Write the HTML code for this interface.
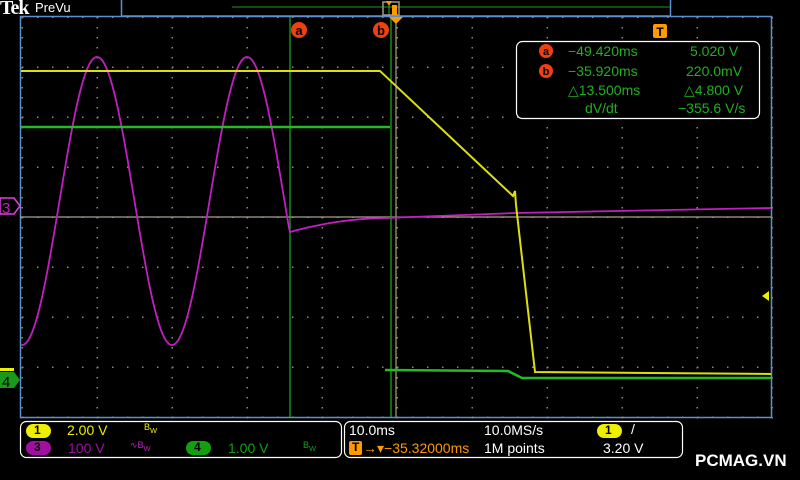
<!DOCTYPE html><html><head><style>
body{margin:0;width:800px;height:480px;background:#000;overflow:hidden;font-family:"Liberation Sans",sans-serif}
svg{position:absolute;left:0;top:0}
.t{position:absolute;font-size:14px;white-space:nowrap}
</style></head><body>
<svg id="s" width="800" height="480" xmlns="http://www.w3.org/2000/svg">
<rect x="121.5" y="-2" width="549" height="18" fill="none" stroke="#5a8fd0" stroke-width="1.5"/>
<line x1="232" y1="7" x2="670" y2="7" stroke="#1a9a1a"/>
<line x1="389" y1="2" x2="389" y2="15" stroke="#2a2"/>
<rect x="383" y="2" width="16" height="13" fill="none" stroke="#998" stroke-width="1.5"/>
<rect x="392" y="5" width="5" height="10" fill="#f90"/>
<polygon points="386,1 392,1 389,6" fill="#f90"/>
<rect x="20.5" y="16.5" width="751" height="401" fill="none" stroke="#5a8fd0" stroke-width="1.5"/>
<g id="grid"></g>
<line x1="20" y1="217" x2="771" y2="217" stroke="#a8a088" stroke-width="1.2"/>
<line x1="396" y1="17" x2="396" y2="417" stroke="#a8a088" stroke-width="1.2"/>
<line x1="290" y1="17" x2="290" y2="417" stroke="#1db01d" stroke-width="1.2"/>
<line x1="391" y1="17" x2="391" y2="417" stroke="#1db01d" stroke-width="1.2"/>
<polygon points="389,17 403,17 396,24" fill="#f90"/>
<path id="mag" fill="none" stroke="#c020c0" stroke-width="1.8"/>
<path d="M21 127 L390 127" stroke="#22bb22" stroke-width="2.5"/>
<path d="M385 370 L508 371 L522 378 L771 378" fill="none" stroke="#22bb22" stroke-width="2.5"/>
<path d="M21 71 L380 71 L513 196 L515 191 L516 205 L535 372 L771 374" fill="none" stroke="#dddd10" stroke-width="2"/>
<circle cx="299" cy="30" r="8" fill="#f04010"/><text x="299" y="35" fill="#000" font-size="13" font-weight="bold" text-anchor="middle">a</text>
<circle cx="381" cy="30" r="8" fill="#f04010"/><text x="381" y="35" fill="#000" font-size="13" font-weight="bold" text-anchor="middle">b</text>
<rect x="653" y="24" width="14" height="14" rx="2" fill="#f90"/><text x="660" y="36" fill="#000" font-size="12" font-weight="bold" text-anchor="middle">T</text>
<rect x="516.5" y="41.5" width="243" height="77" rx="6" fill="#000" stroke="#fff" stroke-width="1.2"/>
<circle cx="546" cy="51" r="7" fill="#f04010"/><text x="546" y="55" fill="#000" font-size="11" font-weight="bold" text-anchor="middle">a</text>
<circle cx="546" cy="71" r="7" fill="#f04010"/><text x="546" y="75" fill="#000" font-size="11" font-weight="bold" text-anchor="middle">b</text>
<polygon points="0,198 14,198 20,206 14,214 0,214" fill="#000" stroke="#e040e0" stroke-width="1.5"/>
<text x="2" y="213" fill="#c020c0" font-size="15">3</text>
<rect x="0" y="368" width="14" height="3" fill="#ee0"/>
<polygon points="0,372 14,372 20,380 14,388 0,388" fill="#1a9a1a"/>
<text x="2" y="387" fill="#000" font-size="15">4</text>
<polygon points="769,291 769,301 762,296" fill="#ee0"/>
<rect x="20.5" y="421.5" width="321" height="36" rx="6" fill="none" stroke="#fff" stroke-width="1.2"/>
<rect x="344.5" y="421.5" width="338" height="36" rx="6" fill="none" stroke="#fff" stroke-width="1.2"/>
<rect x="26" y="424" width="25" height="14" rx="7" fill="#ee0"/>
<rect x="26" y="441" width="25" height="14" rx="7" fill="#a010a0"/>
<rect x="186" y="441" width="25" height="14" rx="7" fill="#10a010"/>
<rect x="597" y="424" width="25" height="14" rx="7" fill="#ee0"/>
<rect x="349" y="441" width="13" height="14" rx="2" fill="#f90"/>
</svg>
<div class="t" style="left:0px;top:-3px;color:#fff;font-family:'Liberation Serif',serif;font-weight:bold;font-size:20px;letter-spacing:-1px">Tek</div>
<div class="t" style="left:35px;top:0px;color:#fff;font-size:13px">PreVu</div>
<div class="t" style="left:568px;top:43px;color:#20b020">−49.420ms</div>
<div class="t" style="left:690px;top:43px;color:#20b020">5.020 V</div>
<div class="t" style="left:568px;top:63px;color:#20b020">−35.920ms</div>
<div class="t" style="left:686px;top:63px;color:#20b020">220.0mV</div>
<div class="t" style="left:568px;top:82px;color:#20b020">△13.500ms</div>
<div class="t" style="left:684px;top:82px;color:#20b020">△4.800 V</div>
<div class="t" style="left:585px;top:100px;color:#20b020">dV/dt</div>
<div class="t" style="left:678px;top:100px;color:#20b020">−355.6 V/s</div>
<div class="t" style="left:34px;top:423px;color:#000;font-size:12px;font-weight:bold">1</div>
<div class="t" style="left:34px;top:440px;color:#000;font-size:12px;font-weight:bold">3</div>
<div class="t" style="left:194px;top:440px;color:#000;font-size:12px;font-weight:bold">4</div>
<div class="t" style="left:605px;top:423px;color:#000;font-size:12px;font-weight:bold">1</div>
<div class="t" style="left:352px;top:440px;color:#000;font-size:12px;font-weight:bold">T</div>
<div class="t" style="left:67px;top:422px;color:#ee0">2.00 V</div>
<div class="t" style="left:144px;top:422px;color:#ee0;font-size:9px">B<sub>W</sub></div>
<div class="t" style="left:68px;top:440px;color:#a010a0">100 V</div>
<div class="t" style="left:130px;top:440px;color:#c020c0;font-size:9px">∿B<sub>W</sub></div>
<div class="t" style="left:228px;top:440px;color:#10a010">1.00 V</div>
<div class="t" style="left:303px;top:440px;color:#10a010;font-size:9px">B<sub>W</sub></div>
<div class="t" style="left:349px;top:422px;color:#fff">10.0ms</div>
<div class="t" style="left:484px;top:422px;color:#fff">10.0MS/s</div>
<div class="t" style="left:631px;top:421px;color:#fff">/</div>
<div class="t" style="left:363px;top:440px;color:#f90">→▾−35.32000ms</div>
<div class="t" style="left:484px;top:440px;color:#fff">1M points</div>
<div class="t" style="left:603px;top:440px;color:#fff">3.20 V</div>
<div class="t" style="left:695px;top:451px;color:#fff;font-size:17px;font-weight:bold">PCMAG.VN</div>
<script>
var g=document.getElementById('grid'),h='';
for(var y=17;y<=417;y+=50){for(var x=22;x<=770;x+=15)h+='<rect x="'+x+'" y="'+(y-0.5)+'" width="1.5" height="1.5" fill="#888"/>';}
for(var x=22;x<=772;x+=75){for(var y=17;y<=417;y+=10)h+='<rect x="'+(x-0.5)+'" y="'+y+'" width="1.5" height="1.5" fill="#888"/>';}
g.innerHTML=h;
var d='M21 '+(201-144*Math.cos(2*Math.PI*(21-97)/150)).toFixed(1);
for(var x=22;x<=289;x++)d+=' L'+x+' '+(201-144*Math.cos(2*Math.PI*(x-97)/150)).toFixed(1);
d+=' L290 232';
for(var x=291;x<=390;x+=5){var t=(x-290)/100;d+=' L'+x+' '+(232-14*(1-(1-t)*(1-t))).toFixed(1);}
d+=' L515 213 L771 208';
document.getElementById('mag').setAttribute('d',d);
</script>
</body></html>
